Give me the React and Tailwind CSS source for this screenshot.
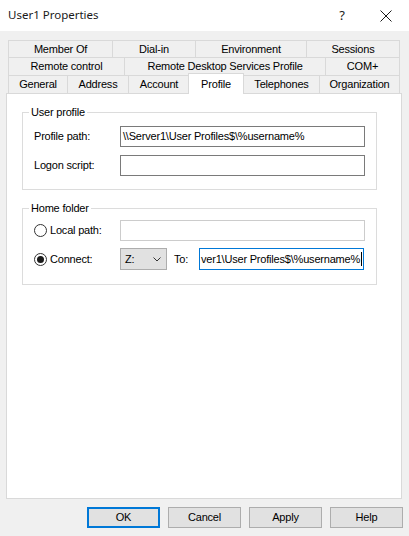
import React from "react";

const tabBase =
  "flex items-center justify-center border-t border-l border-r border-[#d9d9d9] bg-[#f0f0f0] whitespace-nowrap";

const Tab = ({ className, children }) => (
  <div className={`${tabBase} ${className}`}>{children}</div>
);

const Radio = ({ checked }) => (
  <span className="w-[13px] h-[13px] rounded-full border border-[#333333] bg-white flex items-center justify-center shrink-0">
    {checked && <span className="w-[7px] h-[7px] rounded-full bg-[#1a1a1a]" />}
  </span>
);

const Button = ({ children, primary }) => (
  <button
    className={
      primary
        ? "w-[73px] h-[21px] bg-[#e1e1e1] border-2 border-[#0078d7] flex items-center justify-center"
        : "w-[73px] h-[21px] bg-[#e1e1e1] border border-[#adadad] flex items-center justify-center"
    }
  >
    {children}
  </button>
);

const App = () => {
  return (
    <div className="w-[409px] h-[536px] bg-[#f0f0f0] flex flex-col font-['Liberation_Sans',Arial,sans-serif] text-[11px] tracking-[-0.2px] text-black overflow-hidden">
      {/* title bar */}
      <div className="h-[31px] bg-white flex items-center pl-[8px] pr-[17px]">
        <span className="text-[11.5px] tracking-normal font-['Noto_Sans',sans-serif] text-[#1a1a1a] pb-[1px]">
          User1 Properties
        </span>
        <span className="ml-auto text-[13px] tracking-normal font-['Noto_Sans',sans-serif] text-[#1a1a1a]">?</span>
        <svg className="ml-[35px]" width="12" height="12" viewBox="0 0 12 12">
          <path d="M0.5 0.5 L11.5 11.5 M11.5 0.5 L0.5 11.5" stroke="#1a1a1a" strokeWidth="1" />
        </svg>
      </div>

      {/* tabs */}
      <div className="pt-[9px] pl-[8px] flex flex-col">
        <div className="flex h-[17px]">
          <Tab className="w-[105px]">Member Of</Tab>
          <Tab className="w-[84px] -ml-px">Dial-in</Tab>
          <Tab className="w-[112px] -ml-px">Environment</Tab>
          <Tab className="w-[94px] -ml-px">Sessions</Tab>
        </div>
        <div className="flex h-[18px]">
          <Tab className="w-[117px]">Remote control</Tab>
          <Tab className="w-[202px] -ml-px">Remote Desktop Services Profile</Tab>
          <Tab className="w-[75px] -ml-px">COM+</Tab>
        </div>
        <div className="flex h-[18px] items-end">
          <Tab className="w-[60px] h-[18px]">General</Tab>
          <Tab className="w-[62px] h-[18px] -ml-px">Address</Tab>
          <Tab className="w-[62px] h-[18px] -ml-px">Account</Tab>
          <div className="relative z-10 w-[56px] h-[21px] -ml-[2px] -mb-px bg-white border-t border-l border-r border-[#d9d9d9] flex justify-center pt-[2px]">
            Profile
          </div>
          <Tab className="w-[77px] h-[18px] -ml-px">Telephones</Tab>
          <Tab className="w-[81px] h-[18px] -ml-px">Organization</Tab>
        </div>
      </div>

      {/* panel */}
      <div className="ml-[6px] w-[396px] h-[406px] border border-[#d9d9d9] bg-white pt-[11px] pl-[15px]">
        <fieldset className="w-[355px] border border-[#dcdcdc] pb-[13px]">
          <legend className="ml-[6px] px-[2px] leading-[14px]">User profile</legend>
          <div className="flex items-center mt-[7px]">
            <span className="w-[97px] pl-[11px]">Profile path:</span>
            <div className="w-[245px] h-[21px] border border-[#7a7a7a] flex items-center pl-[2px] whitespace-nowrap overflow-hidden">
              \\Server1\User Profiles$\%username%
            </div>
          </div>
          <div className="flex items-center mt-[8px]">
            <span className="w-[97px] pl-[11px]">Logon script:</span>
            <div className="w-[245px] h-[21px] border border-[#7a7a7a]" />
          </div>
        </fieldset>

        <fieldset className="w-[355px] border border-[#dcdcdc] pb-[14px] mt-[11px]">
          <legend className="ml-[6px] px-[2px] leading-[14px]">Home folder</legend>
          <div className="flex items-center mt-[5px]">
            <span className="w-[97px] pl-[11px] flex items-center gap-[3px]">
              <Radio />
              <span>Local path:</span>
            </span>
            <div className="w-[245px] h-[21px] border border-[#cccccc]" />
          </div>
          <div className="flex items-center mt-[7px]">
            <span className="w-[97px] pl-[11px] flex items-center gap-[3px]">
              <Radio checked />
              <span>Connect:</span>
            </span>
            <div className="w-[47px] h-[22px] bg-[#e1e1e1] border border-[#adadad] flex items-center justify-between pl-[4px] pr-[5px]">
              <span>Z:</span>
              <svg width="8" height="5" viewBox="0 0 8 5">
                <path d="M0.5 0.5 L4 4 L7.5 0.5" fill="none" stroke="#333333" strokeWidth="1" />
              </svg>
            </div>
            <span className="w-[25px] ml-[7px]">To:</span>
            <div className="w-[165px] h-[22px] border border-[#0078d7] flex items-center pl-[1px] whitespace-nowrap overflow-hidden tracking-[-0.2px]">
              <span>ver1\User Profiles$\%username%</span>
              <span className="w-px h-[14px] bg-black ml-px shrink-0" />
            </div>
          </div>
        </fieldset>
      </div>

      {/* buttons */}
      <div className="flex gap-[8px] pl-[87px] mt-[8px]">
        <Button primary>OK</Button>
        <Button>Cancel</Button>
        <Button>Apply</Button>
        <Button>Help</Button>
      </div>
    </div>
  );
};

export default App;
